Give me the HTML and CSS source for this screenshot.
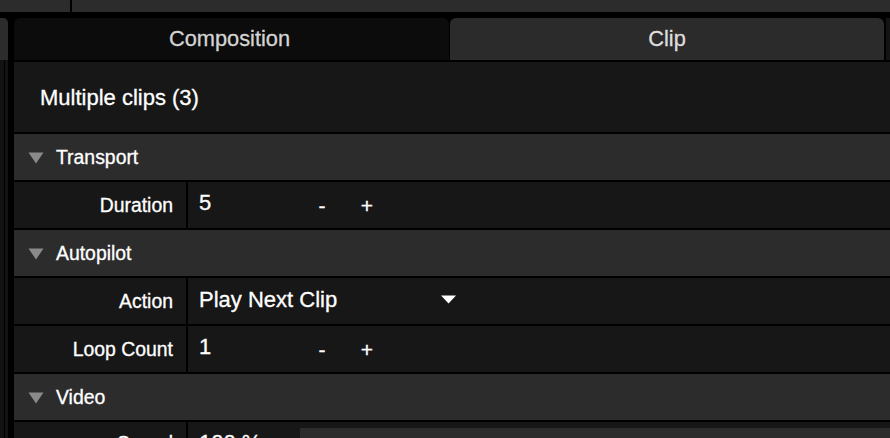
FILE: index.html
```html
<!DOCTYPE html>
<html>
<head>
<meta charset="utf-8">
<link rel="stylesheet" href="styles.css">
</head>
<body>
<div class="app">
  <div class="topbar">
    <div class="topbar-left"></div>
    <div class="topbar-right"></div>
  </div>
  <div class="main">
    <div class="sidebar">
      <div class="sidebar-tab"></div>
      <div class="sidebar-body"><div class="sidebar-line"></div></div>
    </div>
    <div class="panel">
      <div class="tabs">
        <div class="tab tab-inactive">Composition</div>
        <div class="tab tab-active">Clip</div>
        <div class="tabs-rest"></div>
      </div>
      <div class="content">
        <div class="title-row">Multiple clips (3)</div>

        <div class="section-row">
          <svg class="disclosure" width="16" height="12" viewBox="0 0 16 12"><polygon points="0.5,0.5 15.5,0.5 8,11.5" fill="#8a8a8a"/></svg>
          <span class="section-name">Transport</span>
        </div>
        <div class="param-row">
          <div class="param-label">Duration</div>
          <div class="param-value">
            <span class="num">5</span>
            <span class="btn">-</span>
            <span class="btn">+</span>
          </div>
        </div>

        <div class="section-row">
          <svg class="disclosure" width="16" height="12" viewBox="0 0 16 12"><polygon points="0.5,0.5 15.5,0.5 8,11.5" fill="#8a8a8a"/></svg>
          <span class="section-name">Autopilot</span>
        </div>
        <div class="param-row">
          <div class="param-label">Action</div>
          <div class="param-value">
            <span class="dropdown">Play Next Clip</span>
            <svg class="dropdown-arrow" width="15" height="9" viewBox="0 0 15 9"><polygon points="0,0.5 15,0.5 7.5,8.5" fill="#ffffff"/></svg>
          </div>
        </div>
        <div class="param-row">
          <div class="param-label">Loop Count</div>
          <div class="param-value">
            <span class="num">1</span>
            <span class="btn">-</span>
            <span class="btn">+</span>
          </div>
        </div>

        <div class="section-row">
          <svg class="disclosure" width="16" height="12" viewBox="0 0 16 12"><polygon points="0.5,0.5 15.5,0.5 8,11.5" fill="#8a8a8a"/></svg>
          <span class="section-name">Video</span>
        </div>
        <div class="param-row">
          <div class="param-label">Speed</div>
          <div class="param-value">
            <span class="pct">100 %</span>
            <div class="slider"></div>
          </div>
        </div>
      </div>
    </div>
  </div>
</div>
</body>
</html>
```

FILE: styles.css
```css
html, body {
  margin: 0;
  padding: 0;
  background: #000;
  overflow: hidden;
}
body {
  width: 890px;
  height: 438px;
  font-family: "Liberation Sans", Arial, Helvetica, sans-serif;
  color: #fff;
  -webkit-text-stroke: 0.3px currentColor;
}
.app {
  display: flex;
  flex-direction: column;
  gap: 6px;
  height: 438px;
}
.topbar {
  display: flex;
  gap: 2px;
  height: 12px;
  flex: none;
}
.topbar-left {
  width: 70px;
  background: #2c2c2c;
}
.topbar-right {
  flex: 1;
  background: #2c2c2c;
}
.main {
  display: flex;
  gap: 6px;
  flex: 1;
  min-height: 0;
}
.sidebar {
  width: 8px;
  flex: none;
  display: flex;
  flex-direction: column;
}
.sidebar-tab {
  height: 42px;
  background: #2c2c2c;
  border-top-right-radius: 5px;
}
.sidebar-body {
  flex: 1;
  background: #121212;
  display: flex;
  padding-left: 4px;
}
.sidebar-line {
  width: 1px;
  background: #000;
}
.panel {
  flex: 1;
  display: flex;
  flex-direction: column;
  min-width: 0;
}
.tabs {
  display: flex;
  gap: 1px;
  height: 42px;
  flex: none;
}
.tab {
  display: flex;
  align-items: center;
  justify-content: center;
  font-size: 21.8px;
  border-radius: 6px 6px 0 0;
  padding-bottom: 1px;
  box-sizing: border-box;
}
.tab-inactive {
  width: 435px;
  background: #0c0c0c;
  color: #d4d4d4;
  padding-right: 4px;
}
.tab-active {
  width: 434px;
  background: #2b2b2b;
  color: #dedede;
}
.tabs-rest {
  flex: 1;
  margin-left: 1px;
  background: #141414;
}
.content {
  display: flex;
  flex-direction: column;
  gap: 2px;
  padding-top: 2px;
}
.title-row {
  height: 70px;
  flex: none;
  background: #171717;
  display: flex;
  align-items: center;
  padding-left: 26px;
  font-size: 22px;
  padding-top: 2px;
  box-sizing: border-box;
}
.section-row {
  height: 46px;
  flex: none;
  background: #2c2c2c;
  display: flex;
  align-items: center;
  padding-left: 14px;
}
.disclosure {
  display: block;
  margin-top: 1px;
}
.section-name {
  margin-left: 12px;
  font-size: 19.4px;
}
.param-row {
  height: 46px;
  flex: none;
  display: flex;
  gap: 2px;
}
.param-label {
  width: 172px;
  flex: none;
  background: #171717;
  display: flex;
  align-items: center;
  justify-content: flex-end;
  padding-right: 13px;
  box-sizing: border-box;
  font-size: 19.4px;
}
.param-value {
  flex: 1;
  background: #171717;
  display: flex;
  align-items: center;
  padding-left: 11px;
  font-size: 22px;
}
.num {
  width: 108px;
  flex: none;
  margin-top: -4px;
}
.btn {
  width: 30px;
  flex: none;
  text-align: center;
  font-size: 21px;
  padding-top: 2px;
}
.btn + .btn {
  margin-left: 15px;
}
.dropdown {
  width: 242px;
  flex: none;
  margin-top: -2px;
}
.dropdown-arrow {
  display: block;
  margin-top: -4px;
}
.pct {
  width: 101px;
  flex: none;
  align-self: flex-start;
  margin-top: 8px;
}
.slider {
  flex: 1;
  align-self: stretch;
  margin-top: 6px;
  background: #2c2c2c;
}
.param-row:last-child .param-label {
  align-items: flex-start;
  padding-top: 10px;
}
```
